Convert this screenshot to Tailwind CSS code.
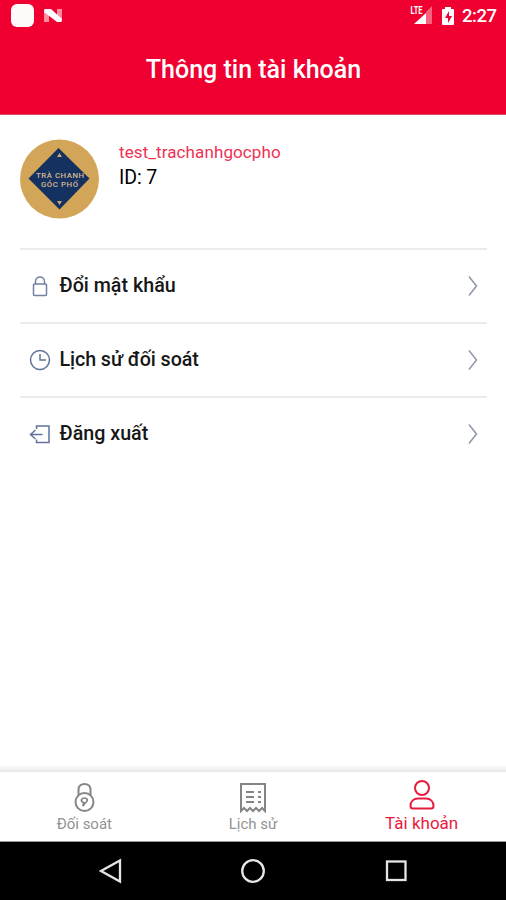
<!DOCTYPE html>
<html lang="vi">
<head>
<meta charset="utf-8">
<title>Thông tin tài khoản</title>
<script src="https://cdn.jsdelivr.net/npm/@tailwindcss/browser@4"></script>
</head>
<body class="bg-white">
<div class="flex h-[900px] w-[506px] flex-col overflow-hidden bg-white font-['Roboto',sans-serif] text-[#171717]">
  <header class="h-[115px] shrink-0 border-b border-[#d8495f] bg-[#ef0030] text-white">
    <div class="flex h-[32px] items-center justify-between pr-[10px] pl-[11px]">
      <div class="flex items-center gap-[9px]">
        <span class="-mt-[2px] size-[23px] rounded-[6px] bg-[#fffafa]"></span>
        <svg class="-mt-px h-[16px] w-[20px]" viewBox="0 0 20 16"><path d="M1 1h5v13H1zM14 1h5v13h-5z" fill="#ff8c9f"/><path d="M2 1h6l11 10-1 3h-4L1 4z" fill="#fff"/></svg>
      </div>
      <div class="flex items-center">
        <svg class="mr-[9px] h-[22px] w-[24px]" viewBox="0 0 24 22"><path d="M17 7l6-6v18h-6z" fill="#f9637e"/><path d="M17 8v11H5z" fill="#fff"/><text x="1.5" y="9" font-size="10.5" font-weight="700" textLength="12" lengthAdjust="spacingAndGlyphs" fill="#fff">LTE</text></svg>
        <svg class="-mt-px mr-[8px] h-[20px] w-[12px]" viewBox="0 0 12 20"><path d="M3 3V1h6v2h2q1 0 1 1v14q0 1-1 1H1q-1 0-1-1V4q0-1 1-1z" fill="#fff"/><path d="M7 5l-4 7h3v5l4-7H7z" fill="#ef0030"/></svg>
        <span class="w-[34px] text-[18.5px] leading-[22px] font-medium tracking-[-0.5px] whitespace-nowrap">2:27</span>
      </div>
    </div>
    <h1 class="mt-[21px] pl-px text-center text-[25px] leading-[34px] font-medium">Thông tin tài khoản</h1>
  </header>

  <main class="flex-1 pr-[19px] pl-[20px]">
    <section class="flex h-[133px] pt-[24px]">
      <svg class="size-[80px]" viewBox="0 0 80 80">
        <circle cx="39.5" cy="40" r="39.5" fill="#d3a558"/>
        <path d="M38.5 9L69.500 39.500 39.500 70.500 8.500 39.500z" fill="#14315f"/>
        <path d="M39.500 14l2.500 4h-5zM37 62h5l-2.500 4z" fill="#c8a878"/>
        <g fill="#d8b992" font-size="7.800" font-weight="500"><text x="16" y="39" textLength="48">TRÀ CHANH</text><text x="21" y="48" textLength="37">GÓC PHỐ</text></g>
      </svg>
      <div class="pl-[19px]">
        <p class="text-[17px] leading-[26px] tracking-[0.1px] text-[#ee3153]">test_trachanhgocpho</p>
        <p class="text-[19.5px] leading-[26px] tracking-[-0.1px] text-black">ID: 7</p>
      </div>
    </section>
    <ul>
      <li class="flex h-[74px] items-center border-t-2 border-[#ebebeb] pr-[8px] pb-px pl-[8px]">
        <svg class="size-[24px]" viewBox="0 0 24 24" fill="none" stroke="#72809f" stroke-width="1.500"><rect x="5.500" y="10" width="13" height="11.500" rx="1"/><path d="M7.500 10V7.500C7.500 1.500 16.500 1.500 16.500 7.500V10"/></svg>
        <span class="pl-[7.5px] text-[19.7px] font-medium">Đổi mật khẩu</span>
        <svg class="ml-auto h-[24px] w-[12px]" viewBox="0 0 12 24" fill="none" stroke="#8d95a8" stroke-width="1.500"><path d="M2 2.500l7.500 9.500L2 21.500"/></svg>
      </li>
      <li class="flex h-[74px] items-center border-t-2 border-[#ebebeb] pr-[8px] pb-px pl-[8px]">
        <svg class="size-[24px]" viewBox="0 0 24 24" fill="none" stroke="#63749a" stroke-width="1.500"><circle cx="12" cy="12" r="9.500"/><path d="M12 6v6h6"/></svg>
        <span class="pl-[7.5px] text-[19.7px] font-medium tracking-[-0.08px]">Lịch sử đối soát</span>
        <svg class="ml-auto h-[24px] w-[12px]" viewBox="0 0 12 24" fill="none" stroke="#8d95a8" stroke-width="1.500"><path d="M2 2.500l7.500 9.500L2 21.500"/></svg>
      </li>
      <li class="flex h-[74px] items-center border-t-2 border-[#ebebeb] pr-[8px] pb-px pl-[8px]">
        <svg class="size-[24px]" viewBox="0 0 24 24" fill="none" stroke="#63749a" stroke-width="1.500"><path d="M8.500 7V4H21v16.500H8.500v-3M14.500 12.500H2.500M7.500 8L2.500 12.500l5 4.500"/></svg>
        <span class="pl-[7.5px] text-[19.7px] font-medium">Đăng xuất</span>
        <svg class="ml-auto h-[24px] w-[12px]" viewBox="0 0 12 24" fill="none" stroke="#8d95a8" stroke-width="1.500"><path d="M2 2.500l7.500 9.500L2 21.500"/></svg>
      </li>
    </ul>
  </main>

  <div class="h-[7px] shrink-0 bg-linear-to-b from-white to-[#e6e6e6]"></div>
  <nav class="grid h-[70px] shrink-0 grid-cols-3 border-b border-[#999] bg-white text-center text-[#929292]">
    <a class="flex flex-col items-center pt-[8px]">
      <svg class="h-[34px] w-[28px]" viewBox="0 0 28 34" fill="none" stroke="#858585" stroke-width="2"><circle cx="14.500" cy="22" r="9"/><path d="M8.500 15V9.500C8.500 2 20.500 2 20.500 9.500V15"/><path d="M13 26l.5-3.500C10 21 11.500 18 14.500 18S18.500 21 15 23z" stroke-width="1.700"/></svg>
      <span class="text-[15px] leading-[20px]">Đối soát</span>
    </a>
    <a class="flex flex-col items-center pt-[8px]">
      <svg class="h-[34px] w-[28px]" viewBox="0 0 28 34" fill="none" stroke="#858585" stroke-width="2"><path d="M2 31V4h24v27l-3-3-3 3-3-3-3 3-3-3-3 3-3-3z"/><path d="M7 12h8M7 17h8M7 22h8M19 12h3M19 17h3M19 22h3"/></svg>
      <span class="text-[15px] leading-[20px]">Lịch sử</span>
    </a>
    <a class="flex flex-col items-center pt-[7px] text-[#e61b3e]">
      <svg class="h-[34px] w-[28px]" viewBox="0 0 28 34" fill="none" stroke="#e61b3e" stroke-width="2"><ellipse cx="14" cy="9" rx="7" ry="7"/><path d="M5 29.500Q2.500 29.500 2.500 27C2.500 22 6 19.500 10 19.500H18C22 19.500 25.500 22 25.500 27Q25.500 29.500 23 29.500z"/></svg>
      <span class="text-[17px] leading-[20px]">Tài khoản</span>
    </a>
  </nav>
  <footer class="grid h-[58px] shrink-0 grid-cols-3 items-center justify-items-center bg-black">
    <svg class="ml-[54px] size-[26px]" viewBox="0 0 26 26" fill="none" stroke="#e5e5e5" stroke-width="2.300"><path d="M22 2.500v21L3 13z"/></svg>
    <svg class="ml-px size-[26px]" viewBox="0 0 26 26" fill="none" stroke="#e5e5e5" stroke-width="2.300"><circle cx="13" cy="13" r="10.800"/></svg>
    <svg class="mr-[52px] size-[26px]" viewBox="0 0 26 26" fill="none" stroke="#e5e5e5" stroke-width="2.300"><rect x="4" y="3.500" width="18.500" height="18.500"/></svg>
  </footer>
</div>
</body>
</html>
